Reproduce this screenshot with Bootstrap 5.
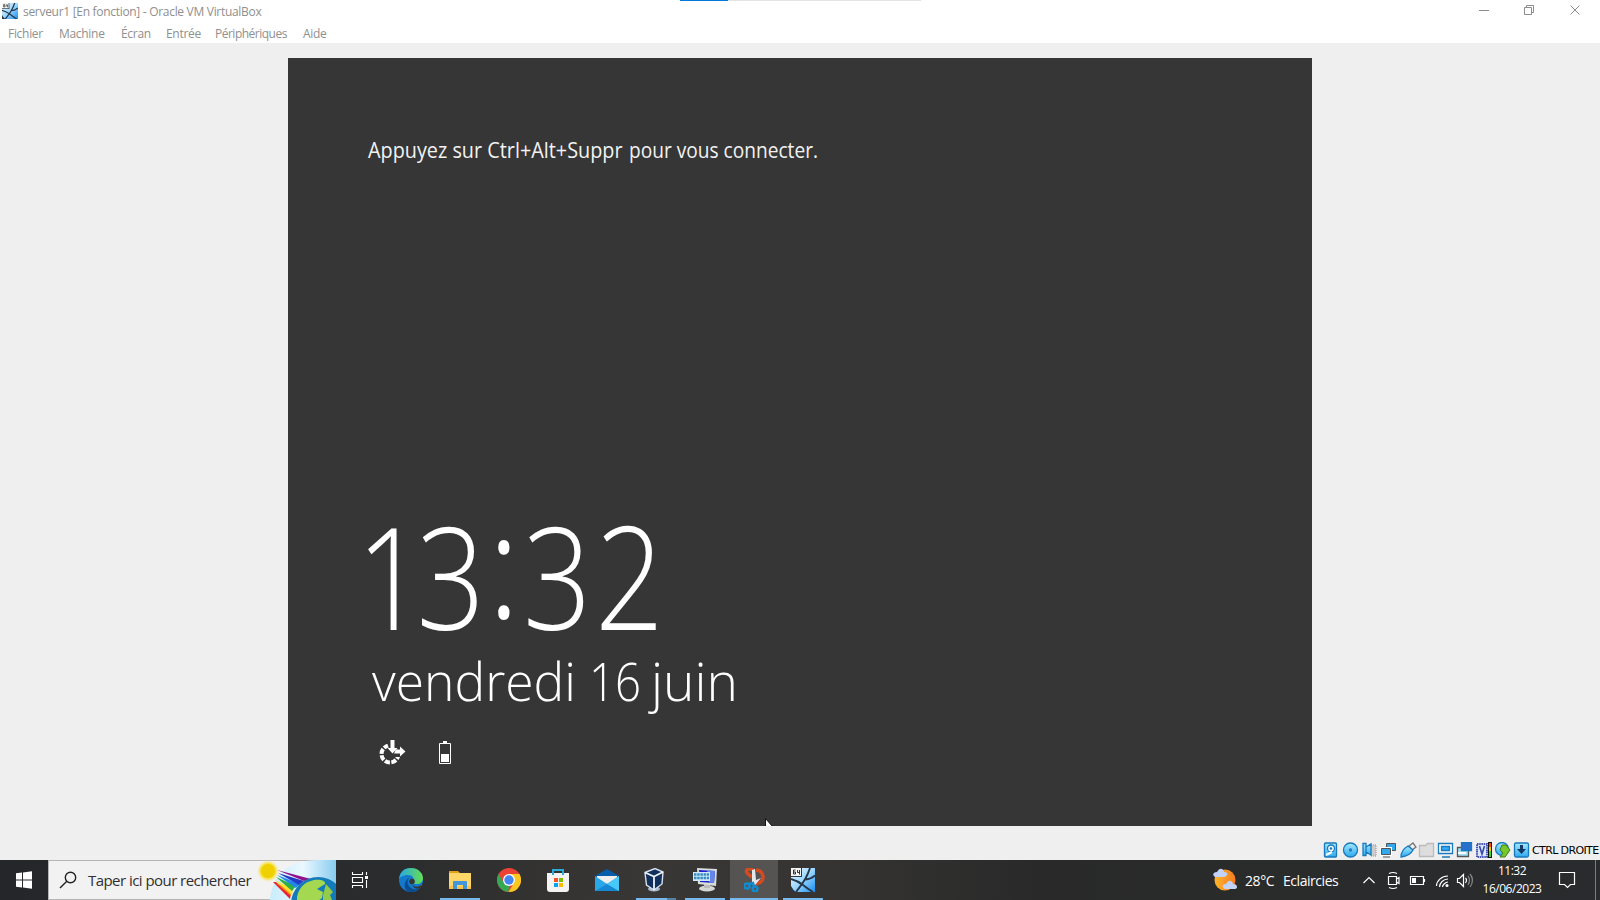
<!DOCTYPE html>
<html lang="fr">
<head>
<meta charset="utf-8">
<title>serveur1 [En fonction] - Oracle VM VirtualBox</title>
<link href="https://cdn.jsdelivr.net/npm/bootstrap@5.3.0/dist/css/bootstrap.min.css" rel="stylesheet">
<style>
body{font-family:"Open Sans","Noto Sans",sans-serif;background:#efefef;height:900px;overflow:hidden}
svg{display:block;flex:none}
.win-head{height:43px;background:#fff;color:#8f8f8f;font-size:12px}
.win-title{height:23px;padding-left:2px}
.win-title .caption{margin-left:5px;letter-spacing:-.3px;line-height:24px}
.menus{height:20px;padding-left:8px;line-height:22px}
.menus a{color:#999;text-decoration:none;white-space:nowrap;letter-spacing:-.3px}
.menus a:nth-child(5){letter-spacing:-.5px}
.vm-screen{width:1024px;height:768px;background:#363636;margin:15px auto 0}
.status{height:34px;padding:16px 2px 0 0}
.status .host-key{font:11px/18px "DejaVu Sans","Noto Sans",sans-serif;color:#000;letter-spacing:-.62px;width:66px;white-space:nowrap;margin-left:1px}
.taskbar{height:40px;background:linear-gradient(90deg,#242629 0,#2b2c2d 25%,#393735 40%,#353433 52%,#292929 65%,#2a2b2b 80%,#292b2e 100%);color:#fff}
.search-box{width:288px;height:40px;background:#f2f2f2;border:1px solid #b5b5b5;border-right:0;color:#303030;font-size:15px}
.search-box .hint{margin-left:11px;width:164px;white-space:nowrap;letter-spacing:-.55px}
.app{width:48px;height:40px;padding-top:8px;border-bottom:2px solid transparent}
.app.run{border-image:linear-gradient(90deg,transparent 4px,#76b9ed 4px 44px,transparent 44px) 0 0 2 0}
.app.multi{border-image:linear-gradient(90deg,transparent 4px,#76b9ed 4px 35px,#5682a6 35px 44px,transparent 44px) 0 0 2 0}
.app.front{background:#555452;border-bottom-color:#76b9ed}
.tray{font-size:14px}
.clock{font-size:12px;line-height:18px;width:78px;letter-spacing:-.48px}
.loader{left:680px;top:0;width:241px;height:1px;background:#e4e4e4}
.loader i{display:block;width:48px;height:1px;background:#0078d7}
.pointer{left:765px;top:818px}
</style>
</head>
<body class="d-flex flex-column position-relative">
<svg width="0" height="0" class="position-absolute">
  <defs>
    <linearGradient id="sky" x1="0" y1="0" x2="1" y2="1"><stop offset="0" stop-color="#f2fbff"/><stop offset=".5" stop-color="#9ad6ff"/><stop offset="1" stop-color="#168df0"/></linearGradient>
    <linearGradient id="btn" x1="0" y1="0" x2="0" y2="1"><stop offset="0" stop-color="#a6eaff"/><stop offset="1" stop-color="#2da9ee"/></linearGradient>
    <symbol id="vm64" viewBox="0 0 24 24"><path fill="url(#sky)" d="M0 0h24v24H0z"/><path d="M19 0Q17 6 14.500 10.500T5 24M0 11q7 2 12 6t10 7M13 11.500Q18 12 24 7.500" fill="none" stroke="#26374a" stroke-width="1.900"/><path d="M0 18v6h5q-3-2-5-6z" fill="#26374a"/><path fill="#26374a" d="M0 0h11v9H0z"/><path fill="#f4f4f4" d="M0 0h10v8H0z"/><path d="M4.500 2H2.500v4h2V4h-2M6.500 2v2.500H9M8.500 2v4.500" fill="none" stroke="#333"/></symbol>
  </defs>
</svg>

<header class="win-head flex-shrink-0">
  <div class="win-title d-flex">
    <svg width="16" height="16" style="margin-top:3px"><use href="#vm64"/></svg>
    <span class="caption">serveur1 [En fonction] - Oracle VM VirtualBox</span>
    <svg class="ms-auto" width="121" height="20" fill="none" stroke="#8c8c8c"><path d="M0 10.500h10M45.500 7.500h7v7h-7zM47.500 7.500v-2h7v7h-2M91.500 5.500l9 9M100.500 5.500l-9 9"/></svg>
  </div>
  <nav class="menus d-flex">
    <a style="width:51px">Fichier</a><a style="width:62px">Machine</a><a style="width:45px">Écran</a><a style="width:49px">Entrée</a><a style="width:88px">Périphériques</a><a>Aide</a>
  </nav>
</header>

<main class="vm-screen flex-shrink-0">
  <svg width="1024" height="768" fill="#fff">
    <g font-size="21" fill="#f2f2f2">
      <text x="80" y="100" textLength="254.500" lengthAdjust="spacingAndGlyphs">Appuyez sur Ctrl+Alt+Suppr</text>
      <text x="341" y="100" textLength="189" lengthAdjust="spacingAndGlyphs">pour vous connecter.</text>
    </g>
    <g font-weight="300">
      <text y="572" x="81.500" dx="0 -10 5 6 4" dy="0 0 -12 12 0" font-size="143" transform="scale(.84 1)">13<tspan stroke="#fff" stroke-width="2">:</tspan>3<tspan font-size="144">2</tspan></text>
      <g font-size="54">
        <text x="84" y="643" textLength="204" lengthAdjust="spacingAndGlyphs">vendredi</text>
        <text x="301" y="643" textLength="52" lengthAdjust="spacingAndGlyphs">16</text>
        <text x="363" y="643" textLength="87" lengthAdjust="spacingAndGlyphs">juin</text>
      </g>
    </g>
    <circle cx="102" cy="696" r="8.500" fill="none" stroke="#fff" stroke-width="4" stroke-dasharray="5.200 1.476"/>
    <path fill="#363636" d="M98 682h15v17h-9z"/>
    <path d="M102.500 682h4v8h3l-5 5.500-5-5.500h3zM108 691.500h4v-3l5.500 5-5.500 5v-3h-6z"/>
    <path d="M151.500 685.500h11v20h-11z" fill="none" stroke="#fff"/><path d="M155 683h4v2h-4zM153 696h8v8h-8z"/>
  </svg>
</main>

<footer class="status d-flex justify-content-end flex-shrink-0">
  <svg width="208" height="17" viewBox="1323 842 208 17" stroke="#1879bd" stroke-width="1.300" fill="url(#btn)">
    <rect x="1324.500" y="843" width="12" height="14" rx="1"/><circle cx="1331" cy="848.500" r="3.500" fill="#f5fbff"/><circle cx="1331" cy="848.500" r=".7"/><path d="M1326 855l6-3" stroke="#fff" stroke-width="2"/>
    <circle cx="1350.500" cy="850" r="7"/><circle cx="1350.500" cy="850" r="1" fill="#fff"/>
    <path d="M1371 845h5v11h-5z" fill="#ccc" stroke="#aaa" stroke-dasharray="1 1"/><path d="M1363 843.500h3v12h-3zM1366 847l5-3v11l-5-3z"/>
    <g stroke-width="1"><path d="M1386.500 843.500h9v7h-9z" fill="#32a9ec" stroke="#555"/><path d="M1381.500 848.500h9v6h-9z" fill="#32a9ec" stroke="#fff" stroke-width="3"/><path d="M1381.500 848.500h9v6h-9zM1383 857h7" fill="#32a9ec" stroke="#555"/></g>
    <path d="M1409 846l4-3 3 4-4 3z" fill="#eee" stroke="#777"/><path d="M1401 857q0-7 7-11l5 4q-3 6-12 7z"/>
    <path d="M1419.500 856.500v-11h6l2-2h6v13z" fill="#ddd" stroke="#bbb"/>
    <path d="M1438.500 843.500h14v10h-14zM1442 857h8" fill="#fff"/><path d="M1441.500 846.500h8v4h-8z" fill="#36aef5"/>
    <path d="M1457.500 847.500h11v9h-11z" fill="#a4dcf8" stroke="#555"/><path d="M1461.500 842.500h10v8h-10z" fill="#2770cf"/><path d="M1458 853h8" stroke="#fff" stroke-width="2"/>
    <path d="M1477 844h10v13h-10z" fill="#dce6ff" stroke="#4351b5" stroke-width="2" stroke-dasharray="1.500 .7"/><path d="M1479.500 846l2.500 8 2.500-8" fill="none" stroke="#344ba8" stroke-width="1.600"/>
    <g stroke="none"><path fill="#111" d="M1488 842h4v16h-4z"/><path fill="#f40" d="M1489 843h2v5h-2z"/><path fill="#fc0" d="M1489 847h2v4h-2z"/><path fill="#3d2" d="M1489 851h2v6h-2z"/></g>
    <circle cx="1502" cy="849" r="6.500"/><path d="M1502 845h4l4 5-5 7h-5l3-4-3-3z" fill="#76c82c" stroke="#407c16" stroke-width="1"/>
    <rect x="1514.500" y="843" width="14" height="14" rx="1.500"/><path d="M1520 845h3v4h3l-4.500 5-4.500-5h3z" fill="#123764" stroke="none"/>
  </svg>
  <span class="host-key">CTRL DROITE</span>
</footer>

<section class="taskbar d-flex flex-shrink-0">
  <svg width="48" height="40" fill="#fff"><path d="M16 13.300l6-.8v7h-6zM23 12.400l9-1.200v8.300h-9zM16 20.500h6v7l-6-.8zM23 20.500h9v8.300l-9-1.200z"/></svg>
  <div class="search-box d-flex align-items-center">
    <svg width="28" height="38" fill="none" stroke="#222" stroke-width="1.400"><circle cx="21.500" cy="16.500" r="5.200"/><path d="M17.800 20.200L11 27"/></svg>
    <span class="hint">Taper ici pour rechercher</span>
    <svg width="84" height="40" viewBox="252 860 84 40">
      <defs><linearGradient id="halo"><stop stop-color="#c8ecfc"/><stop offset=".5" stop-color="#eaf8ff"/><stop offset="1" stop-color="#88cdf0"/></linearGradient><filter id="soft"><feGaussianBlur stdDeviation="1"/></filter></defs>
      <path fill="url(#halo)" d="M270 900c2-26 20-40 48-40h18v40z"/>
      <path fill="#e82331" d="M273 882l3 0 15 12-1 5z"/><path fill="#f98a16" d="M275 882l16 9v5z"/><path fill="#ffe32b" d="M275 880l18 9-1 6z"/><path fill="#30ad45" d="M276 877l20 9-4 5z"/><path fill="#1e87e8" d="M277 875l23 9-4 4z"/><path fill="#263bc5" d="M278 873l26 8-5 4z"/><path fill="#92118c" d="M277 870l34 9-7 2z"/>
      <circle cx="318" cy="904" r="27" fill="#137bb9"/>
      <path d="M297 897c2-10 8-15 17-17 7-1 12 1 11 4l-8 5 6 3-1 6-4 3h-21z" fill="#a4d850"/><path d="M326 884l7 8-3 3 2 5h-9v-5z" fill="#93cb4a"/>
      <circle cx="268" cy="871" r="9" fill="#f9df2d" filter="url(#soft)"/><circle cx="268" cy="871" r="7" fill="#efd000"/>
    </svg>
  </div>
  <svg width="51" height="40" fill="none" stroke="#fff" stroke-width="1.100"><path d="M16.500 12v2.500h10V12M16.500 17.500h10v5h-10zM16.500 28v-2.500h10V28M30.500 12v3M30.500 20v8"/><path d="M29 16h3v3h-3z" fill="#fff" stroke="none"/></svg>

  <nav class="d-flex" style="gap:1px">
    <div class="app d-flex justify-content-center"><svg width="24" height="24"><defs><linearGradient id="ed"><stop stop-color="#26a8e8"/><stop offset="1" stop-color="#67dd50"/></linearGradient></defs><circle cx="12" cy="12" r="12" fill="#1479ca"/><path d="M0 11C1 3 6 0 12 0c7 0 12 5 12 10 0 4-3 6-6 6-4 0-5-1-4-3 2-3-1-6-5-6-4 0-8 2-9 4z" fill="url(#ed)"/><path d="M11 9c-4 3-3 10 3 12 3 1 6 0 8-2-3 5-8 5-12 5C4 22 4 13 11 9z" fill="#0c4c90"/><path d="M13 16c2 4 7 3 9 1v3c-5 2-8 0-9-4z" fill="#373635"/><circle cx="13" cy="13.500" r="2.800" fill="#373635"/></svg></div>
    <div class="app run d-flex justify-content-center"><svg width="24" height="24"><path fill="#e3a21a" d="M1 3h9l2 2v2H1z"/><path fill="#ffd768" d="M1 5h22v16H1z"/><path fill="#f9c34c" d="M1 18h22v3H1z"/><path d="M5 21v-7q0-1 1-1h12q1 0 1 1v7h-4v-4H9v4z" fill="#4296d9"/></svg></div>
    <div class="app d-flex justify-content-center"><svg width="24" height="24"><circle cx="12" cy="12" r="12" fill="#ea4335"/><path d="M1.600 6L6.800 15 12 17.500 11.500 24A12 12 0 0 1 1.600 6z" fill="#34a853"/><path d="M12 6h10.400A12 12 0 0 1 11.500 24l5.500-9z" fill="#fbc822"/><circle cx="12" cy="12" r="6" fill="#fff"/><circle cx="12" cy="12" r="4.700" fill="#4285f4"/></svg></div>
    <div class="app d-flex justify-content-center"><svg width="24" height="24"><path d="M1 5h22v16q0 3-3 3H4q-3 0-3-3z" fill="#f3f3f3"/><path d="M7 7V2h10v5" fill="none" stroke="#29acd9" stroke-width="2"/><path fill="#f35325" d="M8 10h4v4H8z"/><path fill="#81bc06" d="M13 10h4v4h-4z"/><path fill="#05a6f0" d="M8 15h4v4H8z"/><path fill="#ffba08" d="M13 15h4v4h-4z"/></svg></div>
    <div class="app d-flex justify-content-center"><svg width="24" height="24"><path d="M0 8l12-7 12 7v6H0z" fill="#075dab"/><path d="M2 8h20v6l-10 2-10-3z" fill="#eee"/><path d="M0 8l12 8 12-8v15H0z" fill="#28a8e9"/><path d="M0 23l12-7 12 7z" fill="#1788d4"/><path d="M12 16L24 8v15z" fill="#48c9f7"/></svg></div>
    <div class="app multi d-flex justify-content-center"><svg width="24" height="24" style="margin-left:-4px"><ellipse cx="12" cy="21" rx="6" ry="2.500" fill="#a8b8d0"/><path d="M3 4.500l10-4 8 3.500-1 12-8 6-7.500-5z" fill="#102f5c" stroke="#d8e1ee" stroke-width="1.400"/><path d="M3 4.500l9 4L21 4M12 8.500V22" fill="none" stroke="#edf2fa" stroke-width="1.800"/></svg></div>
    <div class="app run d-flex justify-content-center"><svg width="24" height="24"><ellipse cx="14" cy="20.500" rx="8" ry="3" fill="#d3d6d6"/><path d="M11 16h6v4h-6z" fill="#bbb"/><path d="M4 0l20 1-1 17-18-2z" fill="#d9ddd9"/><path d="M6 2l16 1-1 12-14-1z" fill="#1922ce"/><path d="M14 2.500l8 .5-1 12-5-.5z" fill="#6585ed"/><path fill="#d2e8f5" d="M0 4h17v9H0z"/><path d="M1 6.500h15M1 10h15" stroke="#348dc4" stroke-width="2.500" stroke-dasharray="2.500 .7"/></svg></div>
    <div class="app front d-flex justify-content-center"><svg width="24" height="24" style="margin-left:4px"><path d="M9 2C3-1 1 3 4 6l4 3M12 2c9 1 9 12 2 13l-3 1" fill="none" stroke="#d64a20" stroke-width="3.500"/><path d="M8 2l3-1 1 11 5-2-6 7-3-2z" fill="#e5e8ea"/><g fill="none" stroke="#118bd0" stroke-width="2.500"><circle cx="3" cy="18" r="2.600"/><circle cx="11" cy="21" r="2.400"/><path d="M5 16l4-1 1 4"/></g></svg></div>
    <div class="app run d-flex justify-content-center"><svg width="24" height="24"><use href="#vm64"/></svg></div>
  </nav>

  <div class="tray d-flex align-items-center ms-auto">
    <svg width="24" height="24"><defs><linearGradient id="sun" x1="0" x2="1"><stop stop-color="#ffb42b"/><stop offset="1" stop-color="#f57d20"/></linearGradient></defs><circle cx="12" cy="12" r="10.500" fill="url(#sun)"/><path d="M2 9q-3-2-1-4 1-1 3-1 2-4 5-3 2 1 2 3 4 0 3 3-1 2-3 2zM12 21q-3-1-2-4 1-1 3-1 2-4 5-3 2 1 2 3 4 0 4 3 0 2-3 2z" fill="#c3d3f7"/></svg>
    <span style="width:38px;margin-left:8px;letter-spacing:-.4px">28°C</span><span style="width:77px;letter-spacing:-.45px">Eclaircies</span>
    <svg width="124" height="40" viewBox="1360 860 124 40" fill="none" stroke="#fff" stroke-width="1.200">
      <path d="M1363.500 883l5.500-5.500 5.500 5.500"/>
      <path d="M1388.500 876.500h8v8h-8zM1396.500 879l2.500-1.500v6l-2.500-1.500M1389 873.500q4-2 8 0M1389 887.500q4 2 8 0"/>
      <path d="M1410.500 876.500h13v8h-13zM1424.500 879v3"/><path d="M1412 878h4v5h-4z" fill="#fff" stroke="none"/>
      <path d="M1436.500 886c0-5 5-10 11.500-10M1439.500 887c0-4 4-8 8.500-8M1442.500 887c0-2 3-5 5.500-5"/><circle cx="1447" cy="885.500" r="1.500" fill="#fff" stroke="none"/>
      <path d="M1457.500 878.500h2l4-4v12l-4-4h-2zM1465.500 878q2 2 0 5"/><path d="M1468 876q3 4 0 9M1470 874q5 6 0 13" stroke="#888"/>
    </svg>
    <div class="clock text-center" style="margin-left:-11px">11:32<br>16/06/2023</div>
    <svg width="49" height="40" viewBox="1551 860 49 40" fill="none" stroke="#fff" stroke-width="1.200"><path d="M1559.500 872.500h15v12h-4l-3 3-3-3h-5z"/><path d="M1595.500 860v40" stroke="#7d7d7d" stroke-width="1"/></svg>
  </div>
</section>

<div class="loader position-absolute"><i></i></div>
<svg class="pointer position-absolute" width="8" height="8"><path d="M.5.500v8h7z" fill="#fff" stroke="#111"/></svg>
<script src="https://cdn.jsdelivr.net/npm/bootstrap@5.3.0/dist/js/bootstrap.bundle.min.js"></script>
</body>
</html>
